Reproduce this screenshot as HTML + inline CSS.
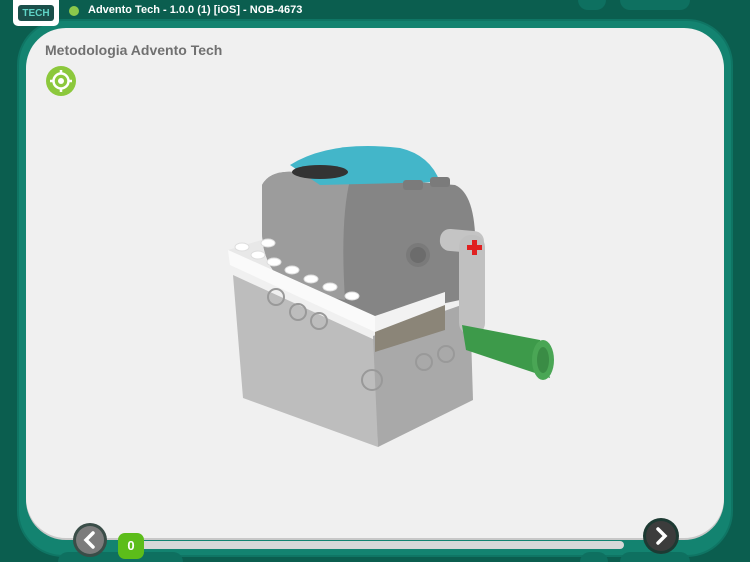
<!DOCTYPE html>
<html><head><meta charset="utf-8"><style>
html,body{margin:0;width:750px;height:562px;overflow:hidden}
body{background:#0b5e4f;font-family:"Liberation Sans",sans-serif;position:relative}
.frame{position:absolute;left:17px;top:19px;width:716px;height:538px;border-radius:46px;background:#138370;border:2px solid #0f7564;box-sizing:border-box}
.panel{position:absolute;left:26px;top:28px;width:698px;height:510px;border-radius:40px;background:#f0f0f0;box-shadow:0 2px 0 #c8c8c8}
.logo{position:absolute;left:13px;top:0;width:46px;height:26px;background:#fff;border-radius:0 0 5px 5px}
.title{position:absolute;left:88px;top:4px;color:#fff;font-size:11px;font-weight:bold}
.dot{position:absolute;left:69px;top:6px;width:10px;height:10px;border-radius:50%;background:#8cc84b}
h1{position:absolute;left:45px;top:42px;margin:0;font-size:14px;color:#707070;font-weight:bold}
</style></head><body>
<div style="position:absolute;left:578px;top:0;width:28px;height:10px;border-radius:0 0 12px 12px;background:#0e7060"></div>
<div style="position:absolute;left:620px;top:0;width:70px;height:10px;border-radius:0 0 12px 12px;background:#0e7060"></div>
<div class="frame"></div>
<div style="position:absolute;left:58px;top:552px;width:125px;height:10px;border-radius:10px 10px 0 0;background:#0e7060"></div>
<div style="position:absolute;left:580px;top:552px;width:28px;height:10px;border-radius:10px 10px 0 0;background:#0e7060"></div>
<div style="position:absolute;left:620px;top:552px;width:70px;height:10px;border-radius:10px 10px 0 0;background:#0e7060"></div>
<div class="panel"></div>
<div class="logo"><div style="position:absolute;left:5px;top:5px;width:36px;height:16px;background:#1a4f4a;border-radius:3px;color:#5fd3c6;font-size:10px;font-weight:bold;text-align:center;line-height:17px">TECH</div></div>
<div class="dot"></div>
<div class="title">Advento Tech - 1.0.0 (1) [iOS] - NOB-4673</div>
<h1>Metodologia Advento Tech</h1>
<svg style="position:absolute;left:46px;top:66px" width="30" height="30"><circle cx="15" cy="15" r="15" fill="#8cc83c"/><circle cx="15" cy="15" r="7.5" fill="none" stroke="#fff" stroke-width="2.5"/><circle cx="15" cy="15" r="3" fill="#fff"/><path d="M15 4v4M15 22v4M4 15h4M22 15h4" stroke="#fff" stroke-width="2.5"/></svg>
<svg style="position:absolute;left:0;top:0" width="750" height="562">
<polygon points="233,275 375,340 378,447 243,398" fill="#bdbdbd"/>
<polygon points="373,336 470,302 473,400 378,447" fill="#a9a9a9"/>
<polygon points="228,250 268,238 445,290 375,316" fill="#e8e8e8"/>
<path d="M262,185 Q270,170 295,172 L455,185 Q478,195 475,260 L460,300 L375,318 L300,292 Q262,275 262,230Z" fill="#858585"/>
<path d="M262,185 Q270,170 295,172 L350,180 Q340,220 345,300 L300,292 Q262,275 262,230Z" fill="#9c9c9c"/>
<circle cx="418" cy="255" r="12" fill="#7a7a7a"/><circle cx="418" cy="255" r="8" fill="#6c6c6c"/>
<path d="M290,165 Q330,140 400,148 Q430,155 440,182 L320,185 Z" fill="#43b6c9"/>
<ellipse cx="320" cy="172" rx="28" ry="7" fill="#333"/>
<rect x="403" y="180" width="20" height="10" rx="3" fill="#7b7b7b"/><rect x="430" y="177" width="20" height="10" rx="3" fill="#7b7b7b"/>
<polygon points="228,250 375,316 375,332 230,265" fill="#fafafa"/>
<polygon points="375,316 445,292 445,305 375,332" fill="#f2f2f2"/>
<polygon points="375,332 445,305 445,330 375,352" fill="#8b8578"/>
<g fill="#fff" stroke="#ddd" stroke-width="1"><ellipse cx="242" cy="247" rx="7" ry="4"/><ellipse cx="258" cy="255" rx="7" ry="4"/><ellipse cx="274" cy="262" rx="7" ry="4"/><ellipse cx="292" cy="270" rx="7" ry="4"/><ellipse cx="311" cy="279" rx="7" ry="4"/><ellipse cx="330" cy="287" rx="7" ry="4"/><ellipse cx="352" cy="296" rx="7" ry="4"/><ellipse cx="268" cy="243" rx="7" ry="4"/></g>
<g fill="none" stroke="#999" stroke-width="2"><circle cx="276" cy="297" r="8"/><circle cx="298" cy="312" r="8"/><circle cx="319" cy="321" r="8"/><circle cx="372" cy="380" r="10"/><circle cx="424" cy="362" r="8"/><circle cx="446" cy="354" r="8"/></g>
<rect x="440" y="230" width="44" height="22" rx="10" fill="#c4c4c4" transform="rotate(5 462 240)"/>
<rect x="459" y="235" width="26" height="100" rx="12" fill="#c0c0c0"/>
<path d="M470 245h5v-5h5v5h5v5h-5v5h-5v-5h-5z" fill="#e02020" transform="translate(-3 0)"/>
<polygon points="462,325 540,340 550,378 466,350" fill="#3d9a4a"/>
<ellipse cx="543" cy="360" rx="11" ry="20" fill="#4aa655"/>
<ellipse cx="543" cy="360" rx="6" ry="13" fill="#3a8c45"/>
</svg>
<div style="position:absolute;left:130px;top:541px;width:494px;height:8px;border-radius:4px;background:#d8d8d8"></div>
<div style="position:absolute;left:118px;top:533px;width:26px;height:26px;border-radius:7px;background:#5cbd1a;color:#fff;font-weight:bold;font-size:13px;text-align:center;line-height:26px">0</div>
<svg style="position:absolute;left:72px;top:522px" width="36" height="36"><circle cx="18" cy="18" r="17" fill="#3a4d48"/><circle cx="18" cy="18" r="14" fill="#7c7c7c"/><path d="M21 11l-7 7 7 7" fill="none" stroke="#fff" stroke-width="3.5" stroke-linecap="round"/></svg>
<svg style="position:absolute;left:642px;top:517px" width="38" height="38"><circle cx="19" cy="19" r="18" fill="#1d3a33"/><circle cx="19" cy="19" r="15" fill="#3c3c3c"/><path d="M16 12l7 7-7 7" fill="none" stroke="#fff" stroke-width="3.5" stroke-linecap="round"/></svg>
</body></html>
